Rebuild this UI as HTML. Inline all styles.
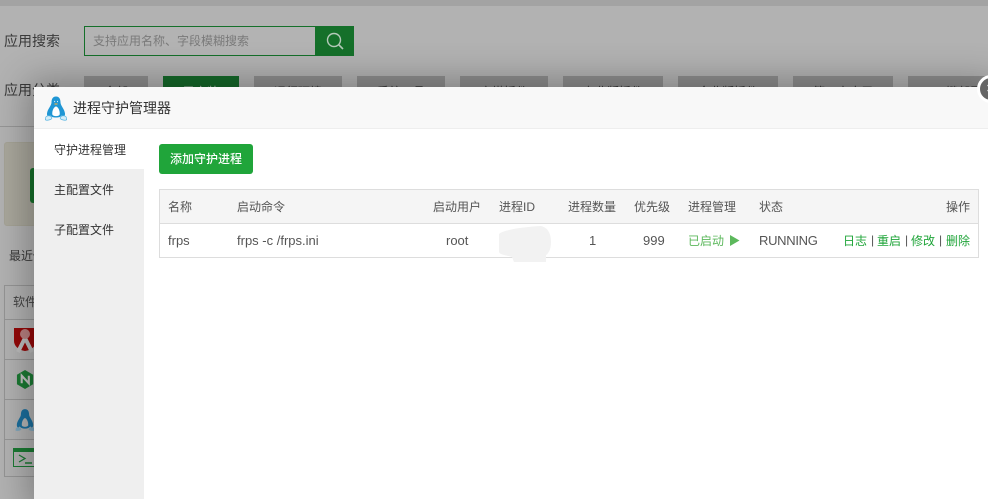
<!DOCTYPE html>
<html lang="zh-CN"><head><meta charset="utf-8"><title>进程守护管理器</title>
<style>
html,body{margin:0;padding:0;width:988px;height:499px;overflow:hidden}
body{position:relative;background:#b2b2b2;font-family:"Liberation Sans","Noto Sans CJK SC",sans-serif;font-size:12px;color:#555}
.a{position:absolute;white-space:nowrap}
.t{position:absolute;white-space:nowrap;line-height:16px}
.tab{position:absolute;top:76px;height:30px;background:#8e8e8e;color:#333;text-align:center;line-height:32px;font-size:12px}
.g{color:#20a53a}
</style></head><body>
<div class="a" style="left:0;top:0;width:988px;height:6px;background:#a3a3a3"></div>
<div class="a" style="left:4px;top:32px;font-size:14px;line-height:18px;color:#3a3a3a">应用搜索</div>
<div class="a" style="left:84px;top:26px;height:28px;border:1px solid #15702a;border-right:0;background:#b3b3b3;color:#7a7a7a;line-height:29px;padding-left:8px;font-size:12px;width:223px">支持应用名称、字段模糊搜索</div>
<div class="a" style="left:315px;top:26px;width:39px;height:30px;background:#15702a">
<svg width="39" height="30" style="display:block"><circle cx="19" cy="14" r="6.500" fill="none" stroke="#b5c9b9" stroke-width="1.400"/><path d="M24 19l4 4" stroke="#b5c9b9" stroke-width="1.600"/></svg></div>
<div class="a" style="left:4px;top:81px;font-size:14px;line-height:18px;color:#3a3a3a">应用分类</div>
<div class="tab" style="left:84px;width:64px">全部</div>
<div class="tab" style="left:163px;width:76px;background:#15692a;color:#bbb">已安装</div>
<div class="tab" style="left:254px;width:88px">运行环境</div>
<div class="tab" style="left:357px;width:88px">系统工具</div>
<div class="tab" style="left:460px;width:88px">宝塔插件</div>
<div class="tab" style="left:563px;width:100px">专业版插件</div>
<div class="tab" style="left:678px;width:100px">企业版插件</div>
<div class="tab" style="left:793px;width:100px">第三方应用</div>
<div class="tab" style="left:908px;width:100px">一键部署</div>
<div class="a" style="left:0;top:126px;width:988px;height:1px;background:#969696"></div>
<div class="a" style="left:4px;top:142px;width:60px;height:82px;border:1px solid #a5a396;border-radius:3px;background:#a9a79c"></div>
<div class="a" style="left:30px;top:168px;width:30px;height:35px;background:#15702a;border-radius:3px"></div>
<div class="a" style="left:9px;top:247px;line-height:18px;color:#3a3a3a">最近使用</div>
<div class="a" style="left:4px;top:285px;width:60px;height:190px;border:1px solid #959595"></div>
<div class="a" style="left:13px;top:294px;line-height:16px;color:#444">软件名称</div>
<div class="a" style="left:4px;top:319px;width:60px;height:1px;background:#959595"></div>
<div class="a" style="left:4px;top:359px;width:60px;height:1px;background:#959595"></div>
<div class="a" style="left:4px;top:399px;width:60px;height:1px;background:#959595"></div>
<div class="a" style="left:4px;top:439px;width:60px;height:1px;background:#959595"></div>
<svg class="a" style="left:14px;top:327px" width="24" height="26" viewBox="0 0 24 26"><path d="M0 1h22v13c0 5-4 9-11 10C4.500 23 0 19 0 14z" fill="#940808"/><path d="M4 25l7-14 7 14" fill="none" stroke="#bdbdbd" stroke-width="4"/><circle cx="11" cy="7" r="5" fill="#b98080"/></svg>
<svg class="a" style="left:16px;top:369px" width="19" height="21" viewBox="0 0 20 22"><path d="M9.500 1l8.500 5v10l-8.500 5-8.500-5V6z" fill="#1b7a33"/><path d="M6 15V7l7.500 8V7" fill="none" stroke="#c4c4c4" stroke-width="2.200"/></svg>
<svg class="a" style="left:15px;top:407px" width="20" height="26" viewBox="0 0 22 26"><path d="M11 1c3.500 0 4.500 3 4.500 6 0 3 4.500 7 4.500 11.500 0 2-1 3-2 3.500l-1-2c-1 1.500-3 2.500-6 2.500s-5-1-6-2.500l-1 2c-1-.5-2-1.500-2-3.500C2 14 6.500 10 6.500 7c0-3 1-6 4.500-6z" fill="#1b6f9e"/><path d="M11 11c1.500 0 4 4 3.500 8-1 2-6 2-7 0-.5-4 2-8 3.500-8z" fill="#b5b5b5"/><path d="M1 22c2-2 5-1 6 1 .5 1.500-5 2.500-6.500 1.500zM21 22c-2-2-5-1-6 1-.5 1.500 5 2.500 6.500 1.500z" fill="#7da6bd"/></svg>
<svg class="a" style="left:13px;top:448px" width="24" height="20" viewBox="0 0 24 20"><rect x=".5" y=".5" width="23" height="18" fill="none" stroke="#1b7a33"/><rect width="24" height="4" fill="#1b7a33"/><path d="M6 7l6 3.500L6 14" fill="none" stroke="#1b7a33" stroke-width="1.300"/><path d="M12 15h7" stroke="#1b7a33" stroke-width="1.500"/></svg>

<!-- modal -->
<div class="a" style="left:34px;top:87px;width:960px;height:420px;background:#fff;box-shadow:0 0 34px 6px rgba(0,0,0,.3)"></div>
<div class="a" style="left:34px;top:87px;width:954px;height:41px;background:#f8f8f8;border-bottom:1px solid #eee"></div>
<svg class="a" style="left:45px;top:96px" width="22" height="25" viewBox="0 0 22 25"><path d="M11 .5c3.500 0 4.500 3 4.500 6 0 3 4 6.500 4.500 11 .2 2-1 3.500-2 4l-1.500-2c-1 1.500-2.500 2-5.500 2s-4.500-.5-5.500-2L4 21.500c-1-.5-2.200-2-2-4C2.500 13 6.500 9.500 6.500 6.500c0-3 1-6 4.500-6z" fill="#1f96d4"/><path d="M11 10.500c1.800 0 4.200 4 3.700 8-.8 2.200-6.600 2.200-7.400 0-.5-4 1.900-8 3.700-8z" fill="#fff"/><path d="M.8 21c2-2 5-1.500 6 1 .5 1.500-5 3-6.500 1.700zM21.200 21c-2-2-5-1.500-6 1-.5 1.500 5 3 6.500 1.700z" fill="#d4edf8" stroke="#57b5e2" stroke-width=".7"/><path d="M9.300 5.500h.8M12 5.500h.8" stroke="#fff" stroke-width="1.200"/><path d="M9.500 8h3" stroke="#e8b04a" stroke-width="1.200"/></svg>
<div class="a" style="left:73px;top:99px;font-size:14px;line-height:18px;color:#333">进程守护管理器</div>
<div class="a" style="left:34px;top:169px;width:110px;height:330px;background:#efefef"></div>
<div class="t" style="left:54px;top:142px;color:#333">守护进程管理</div>
<div class="t" style="left:54px;top:182px;color:#333">主配置文件</div>
<div class="t" style="left:54px;top:222px;color:#333">子配置文件</div>
<div class="a" style="left:159px;top:144px;width:94px;height:30px;background:#20a53a;border-radius:3px;color:#fff;text-align:center;line-height:31px;font-size:12px;font-weight:500">添加守护进程</div>
<div class="a" style="left:159px;top:189px;width:818px;height:67px;border:1px solid #ddd"></div>
<div class="a" style="left:160px;top:190px;width:818px;height:33px;background:#f5f5f5;border-bottom:1px solid #ddd"></div>
<div class="t" style="left:168px;top:199px">名称</div>
<div class="t" style="left:237px;top:199px">启动命令</div>
<div class="t" style="left:433px;top:199px">启动用户</div>
<div class="t" style="left:499px;top:199px">进程ID</div>
<div class="t" style="left:568px;top:199px">进程数量</div>
<div class="t" style="left:634px;top:199px">优先级</div>
<div class="t" style="left:688px;top:199px">进程管理</div>
<div class="t" style="left:759px;top:199px">状态</div>
<div class="t" style="right:18px;top:199px">操作</div>
<div class="t" style="left:168px;top:233px;font-size:13px">frps</div>
<div class="t" style="left:237px;top:233px;font-size:13px">frps -c /frps.ini</div>
<div class="t" style="left:446px;top:233px;font-size:13px">root</div>
<svg class="a" style="left:497px;top:225px" width="58" height="38"><path d="M2 9C6 5 25 2 44 1c8 2 10 9 10 16 0 8-3 12-5 13v7H17l-2-5C9 30 3 30 2 27z" fill="#f2f2f2"/></svg>
<div class="t" style="left:589px;top:233px;font-size:13px">1</div>
<div class="t" style="left:643px;top:233px;font-size:13px">999</div>
<div class="t" style="left:688px;top:233px;color:#5cb85c">已启动</div>
<svg class="a" style="left:729px;top:235px" width="11" height="11"><path d="M1 0l9.500 5.500L1 11z" fill="#5cb85c"/></svg>
<div class="t" style="left:759px;top:233px;font-size:13px;letter-spacing:-.3px">RUNNING</div>
<div class="t g" style="left:843px;top:233px">日志</div><div class="t" style="left:871px;top:232px">|</div>
<div class="t g" style="left:877px;top:233px">重启</div><div class="t" style="left:905px;top:232px">|</div>
<div class="t g" style="left:911px;top:233px">修改</div><div class="t" style="left:939px;top:232px">|</div>
<div class="t g" style="left:946px;top:233px">删除</div>
<div class="a" style="left:977px;top:75px;width:28px;height:28px;box-sizing:border-box;border:3px solid #fff;border-radius:50%;background:#666;color:#ddd;font-size:15px;line-height:21px;text-indent:6px">×</div>
</body></html>
